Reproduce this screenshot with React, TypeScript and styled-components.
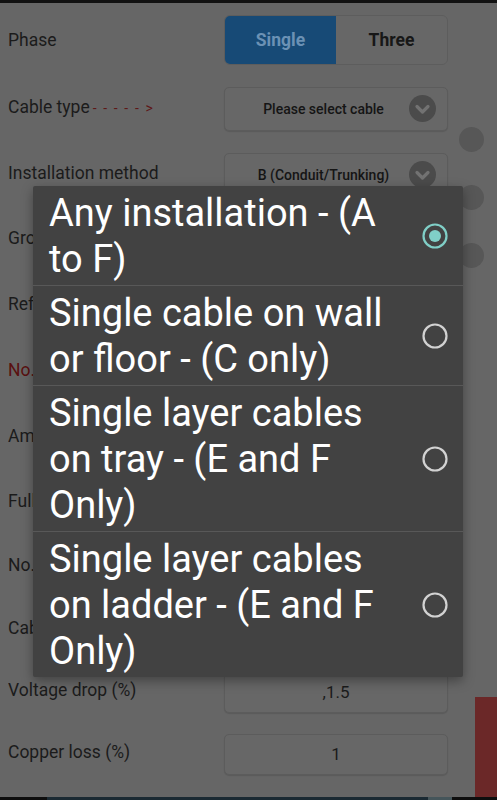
import * as React from 'react'
import styled, {createGlobalStyle} from 'styled-components'

const GlobalStyle = createGlobalStyle`
  html, body {
    margin: 0;
    background: #666666;
    font-family: Roboto, 'Liberation Sans', sans-serif;
  }
`

const Screen = styled.div`
  position: relative;
  width: 497px;
  height: 800px;
  overflow: hidden;
  display: flex;
  flex-direction: column;
  background: #666666;
`

const TopEdge = styled.div`
  height: 3px;
  background: #121212;
`

const Form = styled.div`
  display: flex;
  flex-direction: column;
  padding: 4px 0 0 8px;
`

const Row = styled.div<{$h: number}>`
  display: grid;
  grid-template-columns: 216px 224px;
  align-items: center;
  height: ${p => p.$h}px;
`

const Label = styled.div<{$alert?: boolean}>`
  font-size: 17.5px;
  color: ${p => (p.$alert ? '#5a1010' : '#1b1b1b')};
  white-space: nowrap;
  overflow: hidden;
`

const Dashes = styled.span`
  font-size: 14px;
  color: #5e1818;
  margin-left: 3px;
  letter-spacing: 1.6px;
`

const Segmented = styled.div`
  display: grid;
  grid-template-columns: 1fr 1fr;
  height: 50px;
  border: 1px solid #5d5d5d;
  border-radius: 6px;
  overflow: hidden;
  box-sizing: border-box;
`

const Segment = styled.div<{$on?: boolean}>`
  display: flex;
  align-items: center;
  justify-content: center;
  font-size: 17.5px;
  font-weight: 700;
  background: ${p => (p.$on ? '#174a76' : '#676767')};
  color: ${p => (p.$on ? '#6b91b4' : '#171717')};
`

const SelectBox = styled.div`
  display: flex;
  align-items: center;
  height: 44px;
  margin-top: 4px;
  padding: 0 11px 0 13px;
  border: 1px solid #5c5c5c;
  border-radius: 5px;
  background: #676767;
  box-shadow: 0 1px 1px rgba(0, 0, 0, 0.12);
  box-sizing: border-box;
`

const SelectText = styled.div`
  flex: 1;
  text-align: center;
  font-size: 14px;
  font-weight: 500;
  color: #151515;
`

const InputBox = styled.div`
  display: flex;
  align-items: center;
  justify-content: center;
  height: 41px;
  margin-top: 4px;
  border: 1px solid #5c5c5c;
  border-radius: 5px;
  background: #676767;
  box-shadow: 0 1px 1px rgba(0, 0, 0, 0.12);
  box-sizing: border-box;
  font-size: 17px;
  color: #1b1b1b;
`

const SideBubbles = styled.div`
  position: absolute;
  left: 459px;
  top: 127px;
  display: flex;
  flex-direction: column;
  gap: 33px;
`

const Bubble = styled.div`
  width: 25px;
  height: 25px;
  border-radius: 50%;
  background: #575757;
`

const RedTab = styled.div`
  position: absolute;
  right: 0;
  top: 697px;
  width: 22px;
  height: 100px;
  background: #6b2828;
`

const BottomBar = styled.div`
  margin-top: auto;
  height: 3px;
  display: grid;
  grid-template-columns: 47px 381px 24px 1fr;
`

const BarPart = styled.div<{$c: string}>`
  background: ${p => p.$c};
`

const Dialog = styled.div`
  position: absolute;
  left: 33px;
  top: 186px;
  width: 430px;
  background: #424242;
  border-radius: 2px;
  box-shadow: 0 4px 12px rgba(0, 0, 0, 0.35);
  display: flex;
  flex-direction: column;
`

const Option = styled.div`
  display: grid;
  grid-template-columns: 1fr 56px;
  align-items: center;
  padding: 4px 0 3px 16px;
  & + & {
    border-top: 1px solid #585858;
  }
`

const OptionText = styled.div`
  font-size: 38px;
  line-height: 46px;
  color: #ffffff;
  padding-right: 10px;
`

const RadioWrap = styled.div`
  display: flex;
  justify-content: center;
`

const Chevron = () => (
  <svg width="27" height="27" viewBox="0 0 27 27">
    <circle cx="13.5" cy="13.5" r="13.5" fill="#4b4b4b" />
    <path d="M8 11.5 L13.5 17 L19 11.5" fill="none" stroke="#727272" strokeWidth="3.2" strokeLinecap="round" strokeLinejoin="round" />
  </svg>
)

const Radio = ({on}: {on?: boolean}) => (
  <svg width="26" height="26" viewBox="0 0 26 26">
    <circle cx="13" cy="13" r="11.5" fill="none" stroke={on ? '#80cfc7' : '#d2d2d2'} strokeWidth="2.2" />
    {on && <circle cx="13" cy="13" r="6" fill="#80cfc7" />}
  </svg>
)

const options = [
  {text: 'Any installation - (A to F)', on: true},
  {text: 'Single cable on wall or floor - (C only)'},
  {text: 'Single layer cables on tray - (E and F Only)'},
  {text: 'Single layer cables on ladder - (E and F Only)'},
]

const hidden = [
  {label: 'Grouping factor', h: 66},
  {label: 'Reference method', h: 66},
  {label: 'No. of cores', h: 66, alert: true},
  {label: 'Ambient temperature', h: 65},
  {label: 'Full load current', h: 65},
  {label: 'No. of circuits', h: 63},
  {label: 'Cable length (m)', h: 63},
]

export default function App() {
  return (
    <Screen>
      <GlobalStyle />
      <TopEdge />
      <Form>
        <Row $h={66}>
          <Label>Phase</Label>
          <Segmented>
            <Segment $on>Single</Segment>
            <Segment>Three</Segment>
          </Segmented>
        </Row>
        <Row $h={67}>
          <Label>
            Cable type<Dashes>- - - - - &gt;</Dashes>
          </Label>
          <SelectBox>
            <SelectText>Please select cable</SelectText>
            <Chevron />
          </SelectBox>
        </Row>
        <Row $h={65}>
          <Label>Installation method</Label>
          <SelectBox>
            <SelectText>B (Conduit/Trunking)</SelectText>
            <Chevron />
          </SelectBox>
        </Row>
        {hidden.map(r => (
          <Row key={r.label} $h={r.h}>
            <Label $alert={r.alert}>{r.label}</Label>
            <InputBox />
          </Row>
        ))}
        <Row $h={62}>
          <Label>Voltage drop (%)</Label>
          <InputBox>,1.5</InputBox>
        </Row>
        <Row $h={62}>
          <Label>Copper loss (%)</Label>
          <InputBox>1</InputBox>
        </Row>
      </Form>
      <BottomBar>
        <BarPart $c="#0e0e0e" />
        <BarPart $c="#1b2a33" />
        <BarPart $c="#45555a" />
        <BarPart $c="#0e0e0e" />
      </BottomBar>
      <SideBubbles>
        <Bubble />
        <Bubble />
        <Bubble />
      </SideBubbles>
      <RedTab />
      <Dialog>
        {options.map(o => (
          <Option key={o.text}>
            <OptionText>{o.text}</OptionText>
            <RadioWrap>
              <Radio on={o.on} />
            </RadioWrap>
          </Option>
        ))}
      </Dialog>
    </Screen>
  )
}
